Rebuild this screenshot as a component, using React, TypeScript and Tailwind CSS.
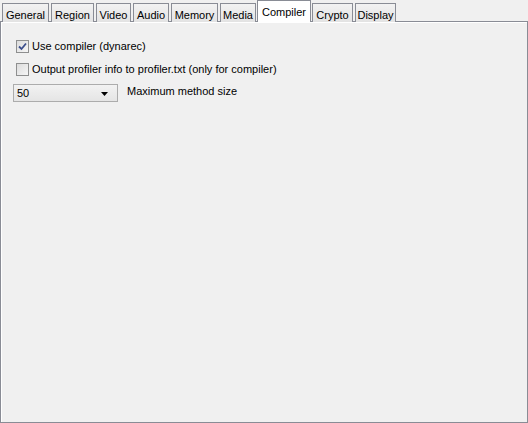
import React from "react";

const tabs = ["General", "Region", "Video", "Audio", "Memory", "Media", "Compiler", "Crypto", "Display"];
const widths = [47, 43, 35, 36, 47, 36, 54, 41, 41];

function Tab({ label, w, active }: { label: string; w: number; active: boolean }) {
  if (active) {
    return (
      <div
        style={{ width: w }}
        className="relative z-10 -mx-[1px] h-[22px] border border-b-0 border-[#898c95] bg-[#ffffff] pt-[3px] text-center"
      >
        {label}
      </div>
    );
  }
  return (
    <div
      style={{ width: w }}
      className="mt-[3px] h-[19px] border border-b-0 border-[#898c95] bg-gradient-to-b from-[#f2f2f2] to-[#e3e3e3] pt-[3px] text-center"
    >
      {label}
    </div>
  );
}

function Check({ checked, label }: { checked: boolean; label: string }) {
  return (
    <div className="flex items-center gap-[3px] h-[13px]">
      <div className="flex h-[13px] w-[13px] items-center justify-center border border-[#8e8f8f] bg-gradient-to-br from-[#dcdcdc] to-[#f6f6f6]">
        {checked && (
          <svg width="9" height="9" viewBox="0 0 9 9">
            <path d="M1 4.5 L3.5 7 L8 1.5" stroke="#3b4e8c" strokeWidth="1.8" fill="none" />
          </svg>
        )}
      </div>
      <span>{label}</span>
    </div>
  );
}

export default function App() {
  return (
    <div
      className="h-[423px] w-[528px] bg-[#f0f0f0] text-[11px] text-black"
      style={{ fontFamily: "Tahoma, 'Liberation Sans', sans-serif" }}
    >
      <div className="flex h-[22px] items-start gap-[2px] pl-[2px]">
        {tabs.map((t, i) => (
          <Tab key={t} label={t} w={widths[i]} active={t === "Compiler"} />
        ))}
      </div>
      <div className="-mt-[1px] h-[402px] border border-[#898c95] bg-[#f0f0f0]">
        <div className="h-full border-t border-l border-white">
          <div className="flex flex-col pl-[14px] pt-[17px]">
            <Check checked label="Use compiler (dynarec)" />
            <div className="h-[10px]" />
            <Check checked={false} label="Output profiler info to profiler.txt (only for compiler)" />
            <div className="flex items-start gap-[9px] -ml-[3px] mt-[8px]">
              <div className="flex h-[18px] w-[105px] items-center justify-between border border-[#acacac] bg-gradient-to-b from-[#f2f2f2] to-[#e5e5e5] px-[3px]">
                <span>50</span>
                <svg width="7" height="4" viewBox="0 0 7 4" className="mr-[6px] mt-[2px]">
                  <path d="M0 0 H7 L3.5 4 Z" fill="#000" />
                </svg>
              </div>
              <span className="-mt-[1px]">Maximum method size</span>
            </div>
          </div>
        </div>
      </div>
    </div>
  );
}
